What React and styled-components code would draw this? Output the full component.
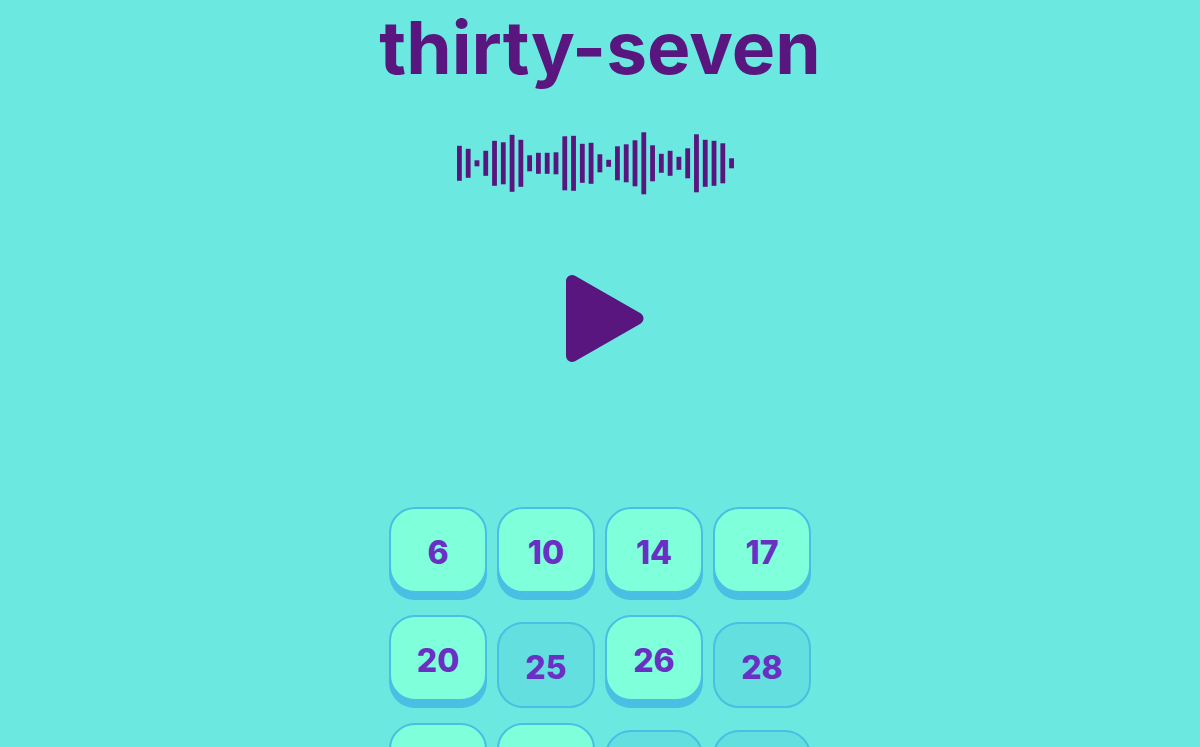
import { useState } from 'react'
import styled, { createGlobalStyle } from 'styled-components'

const bars = [
   35, 29, 6, 25, 45, 42, 57, 47, 16, 21, 21, 22, 54, 55, 39, 41,
   18, 7, 34, 38, 46, 62, 36, 19, 25, 13, 30, 58, 47, 45, 40, 10
]

const numbers = [6, 10, 14, 17, 20, 25, 26, 28, 31, 37, 42, 49]

export default function App() {

   let [ pressed, setPressed ] = useState([25, 28, 42, 49])

   return <Page>
      <GlobalStyle />

      <Word>thirty-seven</Word>

      <Wave />

      <PlayButton type="button" aria-label="Play">
         <svg width="100" height="100" viewBox="0 0 100 100">
            <path d="M22 12 L22 87 L87.500 49.500 Z" fill="currentColor" stroke="currentColor" strokeWidth="12" strokeLinejoin="round" />
         </svg>
      </PlayButton>

      <Keys>
         {numbers.map((number) => (
            <Key
               key={number}
               type="button"
               $pressed={pressed.includes(number)}
               onClick={() => setPressed([...pressed, number])}
            >
               {number}
            </Key>
         ))}
      </Keys>
   </Page>
}

function Wave() {
   return <WaveSvg width="286" height="64" viewBox="0 0 286 64" aria-hidden="true">
      {bars.map((height, i) => (
         <rect key={i} x={i * 8.78} y={32.3 - height / 2} width="4.800" height={height} />
      ))}
   </WaveSvg>
}

const GlobalStyle = createGlobalStyle`
   * {
      box-sizing: border-box;
   }

   body {
      margin: 0;
      background: #6be8df;
      font-family: Inter, "Liberation Sans", sans-serif;
   }`

const Page = styled.main`
   display: flex;
   flex-direction: column;
   align-items: center;
   padding-bottom: 32px;
   color: #58167e;`

const Word = styled.h1`
   margin: 0;
   padding: 4px 0;
   font-size: 73px;
   line-height: 88px;
   font-weight: 700;`

const WaveSvg = styled.svg`
   display: block;
   margin-top: 35px;
   fill: currentColor;`

const PlayButton = styled.button`
   display: flex;
   margin: 74px 0 138px;
   padding: 0;
   border: none;
   background: none;
   color: inherit;
   cursor: pointer;`

const Keys = styled.div`
   display: grid;
   grid-template-columns: repeat(4, 98px);
   gap: 22px 10px;`

const Key = styled.button`
   height: 86px;
   padding: 4px 0 0;
   border: 2px solid #48bfe3;
   border-radius: 26px;
   background: ${({ $pressed }) => $pressed ? '#64dfdf' : '#80ffdb'};
   box-shadow: ${({ $pressed }) => $pressed ? 'none' : '0 7px 0 #48bfe3'};
   transform: ${({ $pressed }) => $pressed ? 'translateY(7px)' : 'none'};
   color: #6930c3;
   font-family: inherit;
   font-size: 32px;
   font-weight: 800;
   cursor: pointer;`
